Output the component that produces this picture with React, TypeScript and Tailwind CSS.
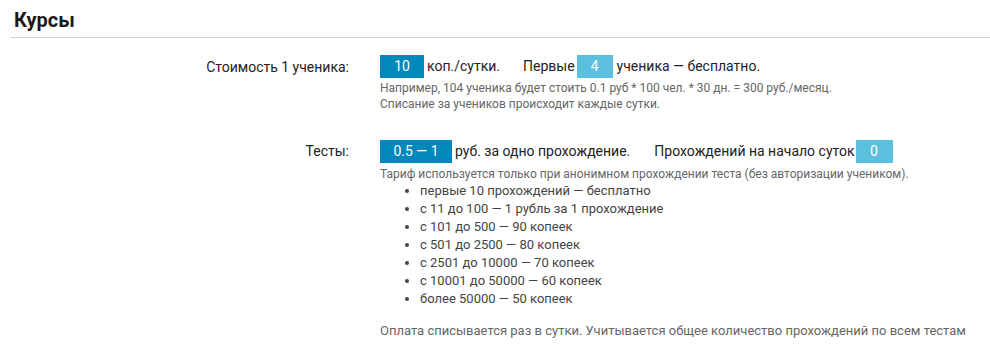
import React from "react";

const prices = [
    "первые 10 прохождений — бесплатно",
    "с 11 до 100 — 1 рубль за 1 прохождение",
    "с 101 до 500 — 90 копеек",
    "с 501 до 2500 — 80 копеек",
    "с 2501 до 10000 — 70 копеек",
    "с 10001 до 50000 — 60 копеек",
    "более 50000 — 50 копеек",
];

function Box({value, light, width}: { value: string, light?: boolean, width: string }) {
    return (
        <span
            className={`inline-flex h-[23px] items-center justify-center text-[14px] text-white ${width} ${light ? "bg-[#5bc0de]" : "bg-[#0088bb]"}`}>
            {value}
        </span>
    );
}

export default function App() {
    return (
        <div className="h-[355px] w-[990px] bg-white text-[#222] font-['Roboto',sans-serif]">
            <div className="ml-[10px] border-b border-[#d4d4d4] pb-[5px] pt-[8px]">
                <h1 className="pl-[4px] text-[20px] font-bold leading-[24px] text-[#1a1a1a]">Курсы</h1>
            </div>

            <div className="mt-[17px] flex flex-row">
                <div className="w-[350px] pr-[1px] pt-[2px] text-right text-[14px] leading-[20px]">Стоимость 1 ученика:</div>
                <div className="ml-[30px] flex flex-col">
                    <div className="flex flex-row items-center text-[14px]">
                        <Box value="10" width="w-[44px]"/>
                        <span className="ml-[3px]">коп./сутки.</span>
                        <span className="ml-[23px]">Первые</span>
                        <span className="ml-[2px]"><Box value="4" light width="w-[36px]"/></span>
                        <span className="ml-[4px]">ученика — бесплатно.</span>
                    </div>
                    <div className="mt-[2px] text-[12px] leading-[16px] text-[#666]">
                        <p>Например, 104 ученика будет стоить 0.1 руб * 100 чел. * 30 дн. = 300 руб./месяц.</p>
                        <p>Списание за учеников происходит каждые сутки.</p>
                    </div>
                </div>
            </div>

            <div className="mt-[28px] flex flex-row">
                <div className="w-[350px] pr-[1px] pt-[1px] text-right text-[14px] leading-[20px]">Тесты:</div>
                <div className="ml-[30px] flex flex-col">
                    <div className="flex flex-row items-center text-[14px]">
                        <Box value="0.5 — 1" width="w-[72px]"/>
                        <span className="ml-[3px]">руб. за одно прохождение.</span>
                        <span className="ml-[24px]">Прохождений на начало суток</span>
                        <span className="ml-[1px]"><Box value="0" light width="w-[37px]"/></span>
                    </div>
                    <p className="mt-[3px] text-[12px] leading-[16px] text-[#666]">Тариф используется только при анонимном прохождении теста (без авторизации учеником).</p>
                    <ul className="ml-[40px] list-disc text-[13px] leading-[18px] text-[#444]">
                        {prices.map((p) => (
                            <li key={p}>{p}</li>
                        ))}
                    </ul>
                    <p className="mt-[14px] text-[13px] leading-[18px] text-[#666]">Оплата списывается раз в сутки. Учитывается общее количество прохождений по всем тестам</p>
                </div>
            </div>
        </div>
    );
}
